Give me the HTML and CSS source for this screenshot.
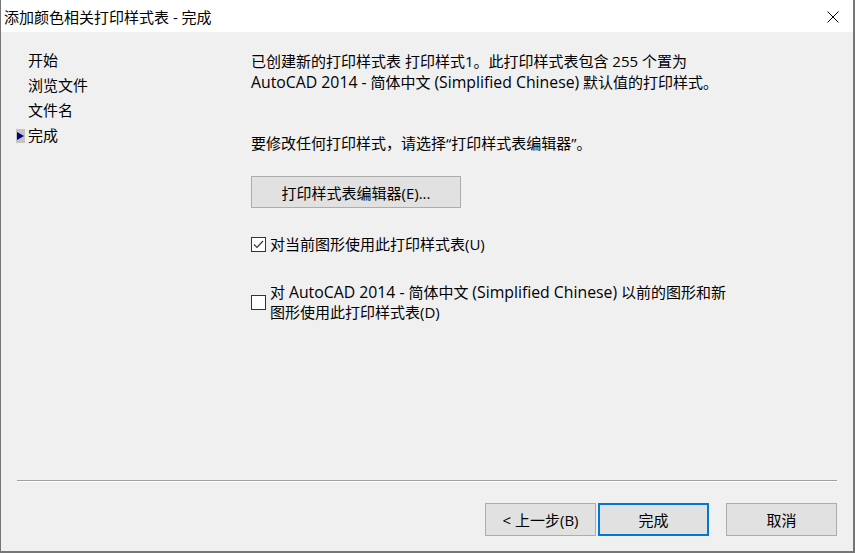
FILE: index.html
```html
<!DOCTYPE html>
<html lang="zh-CN">
<head>
<meta charset="utf-8">
<title>添加颜色相关打印样式表 - 完成</title>
<link rel="stylesheet" href="styles.css">
</head>
<body>
<div class="window">
  <div class="titlebar">
    <span class="title">添加颜色相关打印样式表 - 完成</span>
    <span class="close">
      <svg width="12" height="12" viewBox="0 0 12 12"><path d="M0.5 0.5 L11.5 11.5 M11.5 0.5 L0.5 11.5" stroke="#000" stroke-width="1" fill="none"/></svg>
    </span>
  </div>
  <div class="content">
    <ul class="nav">
      <li><span class="marker"></span>开始</li>
      <li><span class="marker"></span>浏览文件</li>
      <li><span class="marker"></span>文件名</li>
      <li class="current"><span class="marker"><svg width="9" height="14" viewBox="0 0 9 14"><path d="M1 3 L8 7 L1 11 Z" fill="#000080"/></svg></span>完成</li>
    </ul>
    <div class="main">
      <p class="intro">已创建新的打印样式表 打印样式1。此打印样式表包含 255 个置为<br><span class="en">AutoCAD 2014 -</span> 简体中文 <span class="en">(Simplified Chinese)</span> 默认值的打印样式。</p>
      <p class="hint">要修改任何打印样式，请选择“打印样式表编辑器”。</p>
      <button class="btn editor">打印样式表编辑器(E)...</button>
      <label class="check first"><span class="box checked"><svg width="13" height="13" viewBox="0 0 13 13"><path d="M2 6.5 L5 9.5 L11 3" stroke="#333" stroke-width="1.2" fill="none"/></svg></span><span>对当前图形使用此打印样式表(U)</span></label>
      <label class="check second"><span class="box"></span><span class="multi">对 <span class="en">AutoCAD 2014 -</span> 简体中文 <span class="en">(Simplified Chinese)</span> 以前的图形和新<br>图形使用此打印样式表(D)</span></label>
    </div>
  </div>
  <div class="footer">
    <div class="separator"></div>
    <div class="buttons">
      <button class="btn wide">&lt; 上一步(B)</button>
      <button class="btn wide default">完成</button>
      <button class="btn wide cancel">取消</button>
    </div>
  </div>
</div>
</body>
</html>
```
FILE: styles.css
```css
* { box-sizing: border-box; }
html, body { margin: 0; padding: 0; }
body {
  width: 855px;
  height: 553px;
  overflow: hidden;
  font-family: "Open Sans", "Noto Sans CJK SC", sans-serif;
  font-size: 15px;
  color: #000;
}
.en { font-size: 15.8px; }
.window {
  width: 855px;
  height: 553px;
  background: #f0f0f0;
  border-left: 1px solid #767676;
  border-right: 2px solid #767676;
  border-bottom: 2px solid #767676;
  display: flex;
  flex-direction: column;
}
.titlebar {
  height: 32px;
  background: #fff;
  display: flex;
  align-items: center;
  justify-content: space-between;
  padding-left: 3px;
  padding-right: 14px;
  flex: none;
}
.title { line-height: 20px; padding-top: 2px; }
.close { display: flex; padding-top: 2px; }
.content {
  flex: 1;
  display: flex;
}
.nav {
  list-style: none;
  margin: 0;
  padding: 16px 0 0 15px;
  width: 250px;
  flex: none;
}
.nav li {
  display: flex;
  align-items: center;
  height: 25px;
  line-height: 25px;
}
.marker {
  width: 9px;
  height: 14px;
  margin-right: 3px;
  display: flex;
}
.current .marker { background: #c4c4c4; }
.main {
  padding-top: 19px;
  display: flex;
  flex-direction: column;
  align-items: flex-start;
}
.main p { margin: 0; line-height: 21px; }
.hint { margin-top: 40px !important; }
.btn {
  font-family: inherit;
  font-size: 15px;
  color: #000;
  background: #e1e1e1;
  border: 1px solid #adadad;
  padding: 0;
  margin: 0;
}
.editor {
  width: 210px;
  height: 32px;
  margin-top: 22px;
}
.check {
  display: flex;
  align-items: center;
  line-height: 20px;
}
.check.first { margin-top: 26px; }
.check.second { margin-top: 28px; }
.box {
  width: 15px;
  height: 15px;
  border: 1px solid #333;
  background: #fff;
  margin-right: 4px;
  flex: none;
  display: flex;
  align-items: center;
  justify-content: center;
}
.footer {
  flex: none;
  padding: 0 16px 15px 16px;
}
.separator {
  height: 2px;
  border-top: 1px solid #a0a0a0;
  border-bottom: 1px solid #fff;
}
.buttons {
  display: flex;
  justify-content: flex-end;
  margin-top: 21px;
  gap: 2px;
}
.wide { width: 111px; height: 33px; }
.default { border: 2px solid #0078d7; }
.cancel { margin-left: 15px; }
```
